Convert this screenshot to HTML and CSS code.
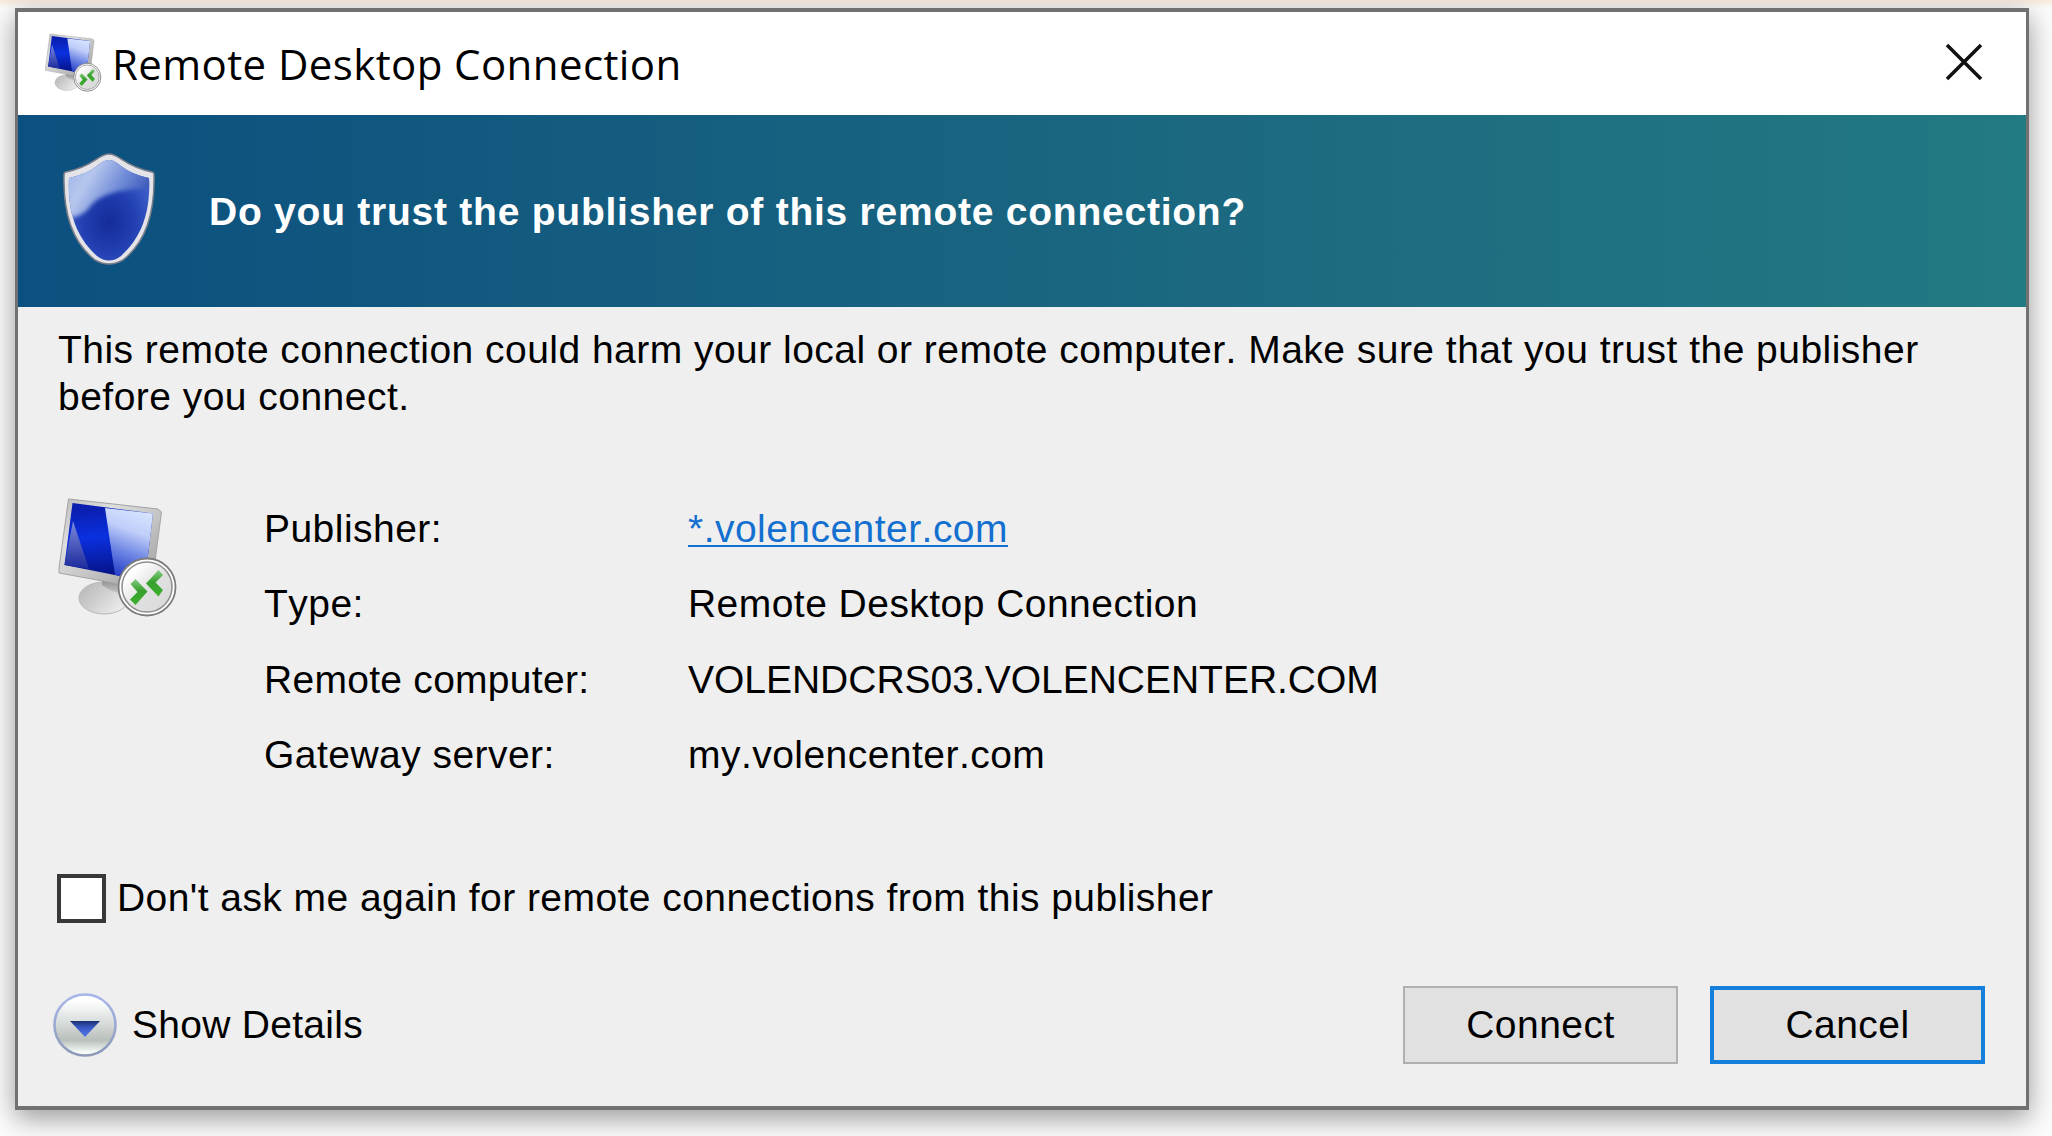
FILE: index.html
```html
<!DOCTYPE html>
<html lang="en">
<head>
  <meta charset="UTF-8" />
  <meta name="viewport" content="width=device-width, initial-scale=1" />
  <title>Remote Desktop Connection</title>
  <link rel="stylesheet" href="styles.css">
</head>
<body>
  <!-- shared icon artwork -->
  <svg class="sprite" width="0" height="0">
    <defs>
      <linearGradient id="frame" x1="0" y1="0" x2="1" y2="1">
        <stop offset="0" stop-color="#bcbcbc" />
        <stop offset="0.3" stop-color="#dedede" />
        <stop offset="1" stop-color="#9c9c9c" />
      </linearGradient>
      <linearGradient id="screen" x1="0.1" y1="0.1" x2="0.2" y2="1">
        <stop offset="0" stop-color="#0a1fb0" />
        <stop offset="0.4" stop-color="#0a30e0" />
        <stop offset="1" stop-color="#06107e" />
      </linearGradient>
      <linearGradient id="glare" x1="0.6" y1="0" x2="0.35" y2="1">
        <stop offset="0" stop-color="#d6e4ff" />
        <stop offset="0.3" stop-color="#c0cefa" />
        <stop offset="0.6" stop-color="#7088e4" />
        <stop offset="1" stop-color="#1a34c4" />
      </linearGradient>
      <linearGradient id="glareLow" x1="0" y1="0" x2="0" y2="1">
        <stop offset="0" stop-color="#7c8ade" />
        <stop offset="1" stop-color="#1c2a9c" />
      </linearGradient>
      <linearGradient id="stand" x1="0" y1="0" x2="1" y2="0.6">
        <stop offset="0" stop-color="#b4b4b4" />
        <stop offset="0.5" stop-color="#cecece" />
        <stop offset="1" stop-color="#ececec" />
      </linearGradient>
      <linearGradient id="neck" x1="0" y1="0" x2="0" y2="1">
        <stop offset="0" stop-color="#8a8a8a" />
        <stop offset="1" stop-color="#c6c6c6" />
      </linearGradient>
      <linearGradient id="badge" x1="0" y1="0" x2="1" y2="1">
        <stop offset="0.2" stop-color="#ffffff" />
        <stop offset="0.55" stop-color="#e0e0e0" />
        <stop offset="1" stop-color="#d8d8d8" />
      </linearGradient>
      <linearGradient id="green" x1="0" y1="0" x2="0" y2="1">
        <stop offset="0" stop-color="#86cc84" />
        <stop offset="0.45" stop-color="#38a02e" />
        <stop offset="1" stop-color="#3cb02c" />
      </linearGradient>
      <symbol id="monitor" viewBox="0 0 120 120">
        <ellipse cx="46" cy="101" rx="25" ry="16" fill="url(#stand)" stroke="#b8b8b8" stroke-width="1" />
        <path d="M44 82 L64 85 L64 96 Q54 96 44 88 Z" fill="url(#neck)" />
        <path d="M10.500 2 L100 12 L103.500 15 L96 72 L72 89 L1 76 L1 71 Z" fill="url(#frame)" stroke="#a4a4a4" stroke-width="1" />
        <path d="M14.500 6 L95 16.500 L87 84 L6.500 68 Z" fill="url(#screen)" />
        <path d="M47 11 L95 16.500 L87 84 L57 78 Z" fill="url(#glare)" />
        <path d="M15 24 L31 72 L6.500 68 Z" fill="url(#glareLow)" />
        <circle cx="89" cy="90" r="28.500" fill="#fff" stroke="#7c7c7c" stroke-width="1.800" />
        <circle cx="89" cy="90" r="25" fill="url(#badge)" stroke="#8c8c8c" stroke-width="1.500" />
        <path d="M72.500 87 L77.500 82 L89.500 94.500 L77.500 108 L72 102.500 L79.500 95 Z" fill="url(#green)" />
        <path d="M100.500 73 L105 78 L97.500 85.500 L105 93 L100.500 99.500 L88 86.500 Z" fill="url(#green)" />
      </symbol>
    </defs>
  </svg>

  <div class="dialog">
    <div class="titlebar">
      <svg class="title-icon" viewBox="0 0 120 120" preserveAspectRatio="none"><use href="#monitor" /></svg>
      <span class="title">Remote Desktop Connection</span>
      <svg class="close" viewBox="0 0 38 38"><path d="M2 2 L36 36 M36 2 L2 36" stroke="#111" stroke-width="3.500" /></svg>
    </div>

    <div class="banner">
      <svg class="shield" viewBox="0 0 96 116">
        <defs>
          <linearGradient id="shieldTop" x1="0" y1="0.200" x2="1" y2="0.600">
            <stop offset="0" stop-color="#8aa8e4" />
            <stop offset="0.350" stop-color="#b8c8ee" />
            <stop offset="0.650" stop-color="#6c88d6" />
            <stop offset="1" stop-color="#2440a8" />
          </linearGradient>
          <radialGradient id="shieldLow" cx="0.500" cy="0.600" r="0.550">
            <stop offset="0" stop-color="#142c98" />
            <stop offset="0.500" stop-color="#2240b2" />
            <stop offset="1" stop-color="#4668d0" />
          </radialGradient>
          <clipPath id="shieldClip"><path d="M48 8 C58 8 60 20 88 26 C90 64 78 88 60 104 Q48 113 36 104 C18 88 6 64 8 26 C36 20 38 8 48 8 Z" /></clipPath>
        </defs>
        <path class="shield-rim" d="M48 2 C59 2 62 14 91 20 Q93 20 93 23 C94 64 84 91 62 108 Q48 116 34 108 C12 91 2 64 3 23 Q3 20 5 20 C34 14 37 2 48 2 Z" />
        <g clip-path="url(#shieldClip)">
          <rect width="96" height="116" fill="url(#shieldLow)" />
          <path class="shield-glare" d="M-6 -6 H102 V36 C58 36 38 42 28 56 Q22 64 8 66 H-6 Z" fill="url(#shieldTop)" />
        </g>
      </svg>
      <h1 class="question">Do you trust the publisher of this remote connection?</h1>
    </div>

    <div class="content">
      <p class="warning">This remote connection could harm your local or remote computer. Make sure that you trust the publisher<br>before you connect.</p>

      <div class="info">
        <svg class="info-icon"><use href="#monitor" /></svg>
        <dl class="details">
          <dt>Publisher:</dt>
          <dd><a class="publisher">*.volencenter.com</a></dd>
          <dt>Type:</dt>
          <dd>Remote Desktop Connection</dd>
          <dt class="tight">Remote computer:</dt>
          <dd class="host">VOLENDCRS03.VOLENCENTER.COM</dd>
          <dt>Gateway server:</dt>
          <dd>my.volencenter.com</dd>
        </dl>
      </div>

      <label class="dont-ask"><input type="checkbox" class="check" /><span>Don't ask me again for remote connections from this publisher</span></label>

      <div class="footer">
        <div class="show-details">
          <svg class="expander" viewBox="0 0 64 64">
            <defs>
              <linearGradient id="knob" x1="0" y1="0" x2="0" y2="1">
                <stop offset="0.100" stop-color="#ffffff" />
                <stop offset="0.400" stop-color="#dfe2e2" />
                <stop offset="0.750" stop-color="#b9bfbb" />
                <stop offset="0.950" stop-color="#f6fcf8" />
              </linearGradient>
              <linearGradient id="knobRing" x1="0" y1="0" x2="0" y2="1">
                <stop offset="0" stop-color="#a9b6ea" />
                <stop offset="1" stop-color="#8c9ab8" />
              </linearGradient>
              <linearGradient id="arrow" x1="0" y1="0" x2="0" y2="1">
                <stop offset="0" stop-color="#1c3070" />
                <stop offset="0.400" stop-color="#3a58c4" />
                <stop offset="1" stop-color="#5478ec" />
              </linearGradient>
            </defs>
            <circle cx="32" cy="32" r="30.500" fill="url(#knob)" stroke="url(#knobRing)" stroke-width="2.600" />
            <path d="M17 28 H47 L32 44 Z" fill="url(#arrow)" />
          </svg>
          <span class="tight">Show Details</span>
        </div>
        <button class="btn">Connect</button>
        <button class="btn btn-default">Cancel</button>
      </div>
    </div>
  </div>
</body>
</html>
```
FILE: styles.css
```css
* {
  box-sizing: border-box;
}
body {
  margin: 0;
  height: 1136px;
  padding: 8px 23px 0 15px;
  overflow: hidden;
  background: linear-gradient(#f8ebdd 0, #f8f0e6 3px, #fcfcfc 8px);
  font-family: "Liberation Sans", Arial, sans-serif;
  font-size: 39px;
  letter-spacing: 0.46px;
  font-kerning: none;
  color: #000;
}
.sprite {
  position: absolute;
}
.dialog {
  height: 1102px;
  border: 4px solid #717171;
  border-width: 4px 3px;
  background: #efefef;
  box-shadow: 0 8px 26px rgba(0, 0, 0, 0.4);
}
.titlebar {
  display: flex;
  align-items: center;
  height: 103px;
  padding: 0 43px 3px 27px;
  background: #fff;
}
.title-icon {
  width: 57px;
  height: 59px;
}
.title {
  flex: 1;
  margin: 2px 0 0 10px;
  font-family: "Open Sans", "Noto Sans", sans-serif;
  font-size: 42px;
  letter-spacing: 0.4px;
}
.close {
  width: 38px;
  height: 38px;
}
.banner {
  display: flex;
  align-items: center;
  height: 192px;
  padding-left: 43px;
  background: linear-gradient(90deg, #0b5080, #11587f 20%, #1e6d81 70%, #227a82);
}
.shield {
  width: 96px;
  height: 116px;
  margin-bottom: 2px;
}
.shield-rim {
  fill: #e4e4e8;
  stroke: #777c88;
  stroke-width: 1.5;
}
.shield-glare {
  filter: blur(2px);
}
.question {
  margin: 2px 0 0 52px;
  font-size: 39px;
  letter-spacing: 0.76px;
  color: #fff;
}
.content {
  padding: 19px 41px 0 40px;
}
.warning {
  margin: 0;
  line-height: 47px;
  white-space: nowrap;
  letter-spacing: 0.47px;
}
.info {
  display: flex;
  margin-top: 77px;
}
.info-icon {
  width: 120px;
  height: 120px;
}
.details {
  display: grid;
  grid-template-columns: 424px 1fr;
  grid-auto-rows: 75.4px;
  margin: -6px 0 0 86px;
  line-height: 75.4px;
}
dd {
  margin: 0;
}
.publisher {
  color: #1470d0;
  text-decoration: underline;
  text-decoration-thickness: 2px;
  text-underline-offset: 3px;
}
.host {
  letter-spacing: -0.02px;
}
.tight {
  letter-spacing: 0.28px;
}
.dont-ask {
  display: flex;
  align-items: center;
  margin-top: 81px;
  letter-spacing: 0.44px;
}
.check {
  appearance: none;
  width: 49px;
  height: 49px;
  margin: 0 11px 0 -1px;
  border: 4px solid #383838;
  background: #fff;
}
.footer {
  display: flex;
  align-items: center;
  margin-top: 63px;
}
.show-details {
  flex: 1;
  display: flex;
  align-items: center;
  margin-left: -5px;
}
.expander {
  width: 64px;
  height: 64px;
  margin-right: 15px;
}
.btn {
  width: 275px;
  height: 78px;
  padding: 0;
  border: 2px solid #b0b0b0;
  background: #e1e1e1;
  font: inherit;
  letter-spacing: inherit;
  color: #000;
}
.btn-default {
  margin-left: 32px;
  border: 4px solid #1580dc;
}
```
